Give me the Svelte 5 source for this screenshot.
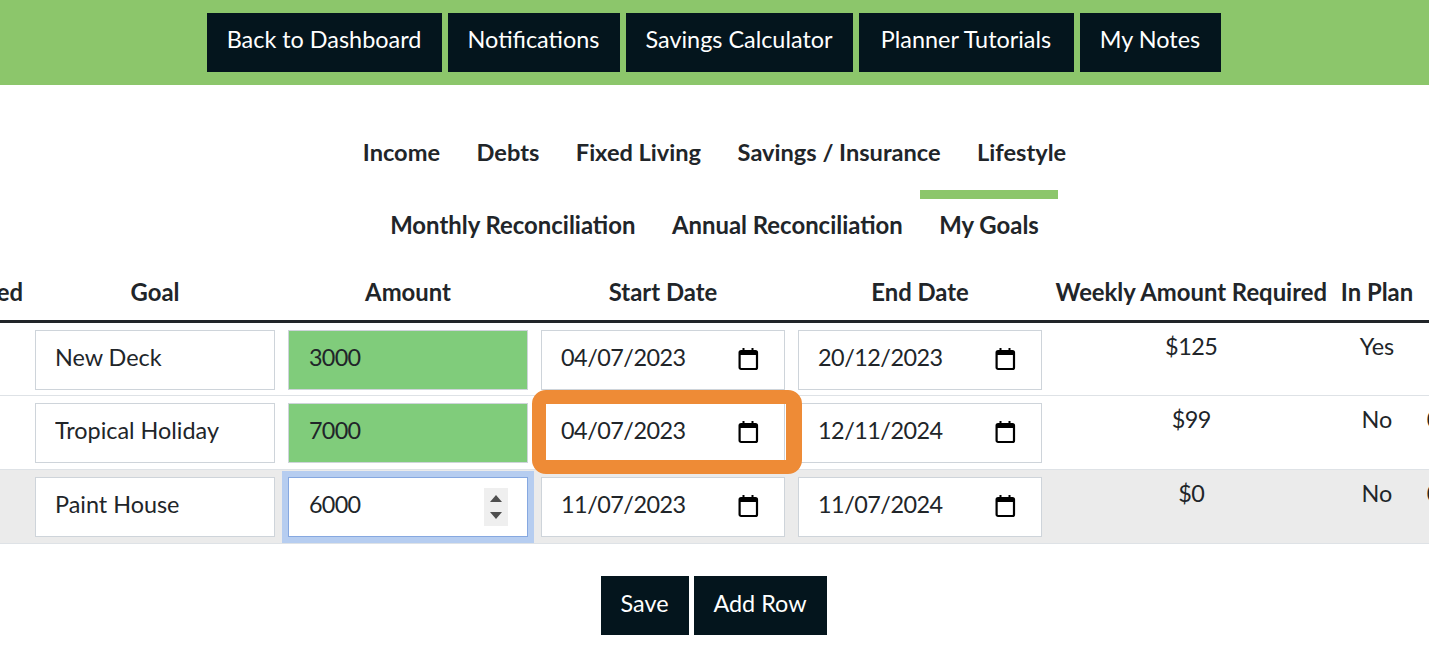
<script>
  const topLinks = ['Back to Dashboard', 'Notifications', 'Savings Calculator', 'Planner Tutorials', 'My Notes'];
  const tabsOne = ['Income', 'Debts', 'Fixed Living', 'Savings / Insurance', 'Lifestyle'];
  const tabsTwo = ['Monthly Reconciliation', 'Annual Reconciliation', 'My Goals'];

  const goals = [
    { name: 'New Deck', amount: '3000', start: '04/07/2023', end: '20/12/2023', weekly: '$125', plan: 'Yes', rest: '' },
    { name: 'Tropical Holiday', amount: '7000', start: '04/07/2023', end: '12/11/2024', weekly: '$99', plan: 'No', rest: '0', marked: true },
    { name: 'Paint House', amount: '6000', start: '11/07/2023', end: '11/07/2024', weekly: '$0', plan: 'No', rest: '0', editing: true }
  ];
</script>

{#snippet calendar()}
  <svg class="cal" width="22" height="24" viewBox="0 0 22 24" aria-hidden="true">
    <path d="M6.5 1v4M15.5 1v4" stroke="#000" stroke-width="2" />
    <rect x="2.6" y="4" width="17.4" height="18" rx="1.5" fill="none" stroke="#000" stroke-width="2.2" />
    <path d="M2.6 5h17.4v3H2.6z" fill="#000" />
  </svg>
{/snippet}

<div class="page">
  <header class="topbar">
    {#each topLinks as link}
      <button class="dark">{link}</button>
    {/each}
  </header>

  <nav class="tabs">
    <div class="tabrow">
      {#each tabsOne as tab}
        <span class="tab">{tab}</span>
      {/each}
      <span class="indicator"></span>
    </div>
    <div class="tabrow second">
      {#each tabsTwo as tab}
        <span class="tab">{tab}</span>
      {/each}
    </div>
  </nav>

  <div class="tablewrap">
    <table>
      <colgroup>
        <col style="width:110px" />
        <col style="width:253px" />
        <col style="width:253px" />
        <col style="width:257px" />
        <col style="width:257px" />
        <col style="width:285.5px" />
        <col style="width:86px" />
        <col style="width:27px" />
      </colgroup>
      <thead>
        <tr>
          <th>Achieved</th>
          <th>Goal</th>
          <th>Amount</th>
          <th>Start Date</th>
          <th>End Date</th>
          <th>Weekly Amount Required</th>
          <th>In Plan</th>
          <th></th>
        </tr>
      </thead>
      <tbody>
        {#each goals as goal}
          <tr class:shaded={goal.editing}>
            <td></td>
            <td><div class="field"><input value={goal.name} /></div></td>
            <td>
              <div class="field amount" class:filled={!goal.editing} class:focused={goal.editing}>
                <input class="num" value={goal.amount} />
                {#if goal.editing}
                  <span class="spinner">
                    <svg width="14" height="30" viewBox="0 0 14 30" aria-hidden="true">
                      <path d="M7 3l6 7H1zM7 27l6-7H1z" fill="#4f4f4f" />
                    </svg>
                  </span>
                {/if}
              </div>
            </td>
            <td>
              <div class="field date">
                <input class="num" value={goal.start} />
                {@render calendar()}
                {#if goal.marked}<span class="callout"></span>{/if}
              </div>
            </td>
            <td>
              <div class="field date">
                <input class="num" value={goal.end} />
                {@render calendar()}
              </div>
            </td>
            <td class="plain num">{goal.weekly}</td>
            <td class="plain">{goal.plan}</td>
            <td class="plain">{goal.rest}</td>
          </tr>
        {/each}
      </tbody>
    </table>
  </div>

  <div class="actions">
    <button class="dark">Save</button>
    <button class="dark">Add Row</button>
  </div>
</div>

<style>
  :global(body) {
    margin: 0;
    background: #fff;
  }
  .page {
    font-family: Lato, "Liberation Sans", sans-serif;
    font-size: 23.4px;
    color: #212529;
    height: 655px;
    overflow: hidden;
  }
  .topbar {
    display: grid;
    grid-template-columns: 235px 172px 227px 215px 141px;
    justify-content: center;
    gap: 6px;
    height: 85px;
    padding: 13px 2px 0 0;
    box-sizing: border-box;
    background: #8cc66b;
  }
  .dark {
    height: 59px;
    padding: 0 0 7px;
    border: none;
    background: #04151d;
    color: #fff;
    font: inherit;
  }
  .tabs {
    padding-top: 31px;
  }
  .tabrow {
    position: relative;
    display: flex;
    justify-content: center;
    height: 73px;
    line-height: 72px;
    font-size: 23.6px;
    font-weight: 700;
  }
  .tabrow.second {
    font-size: 23.9px;
  }
  .tab {
    padding: 0 18.25px;
  }
  .indicator {
    position: absolute;
    left: 920px;
    top: 74px;
    width: 138px;
    height: 9px;
    background: #8cc66b;
  }
  .tablewrap {
    overflow: hidden;
  }
  table {
    table-layout: fixed;
    width: 1528.5px;
    margin-left: -81.5px;
    border-collapse: collapse;
  }
  th {
    height: 59px;
    padding: 2px 6.5px 0;
    font-size: 23.85px;
    font-weight: 700;
    text-align: center;
    white-space: nowrap;
    border-bottom: 3px solid #212529;
    box-sizing: border-box;
  }
  td {
    padding: 7px 6.5px 5.5px;
    border-bottom: 1px solid #dee2e6;
    vertical-align: top;
    text-align: center;
  }
  td.plain {
    line-height: 34px;
    padding-top: 6px;
  }
  .num {
    letter-spacing: -0.5px;
  }
  tr.shaded td {
    padding-bottom: 6.5px;
    background: #ebebeb;
  }
  .field {
    position: relative;
    display: flex;
    align-items: center;
    height: 60px;
    box-sizing: border-box;
    padding: 0 19px;
    border: 1px solid #ced4da;
    background: #fff;
  }
  .field input {
    flex: 1;
    min-width: 0;
    padding: 0 0 6px;
    border: none;
    outline: none;
    background: transparent;
    color: inherit;
    font: inherit;
  }
  .field input.num {
    letter-spacing: -0.5px;
  }
  .field.amount {
    padding-left: 20px;
  }
  .field.amount input.num {
    letter-spacing: -0.7px;
  }
  .field.filled {
    background: #80cc7b;
  }
  .field.focused {
    z-index: 1;
    border-color: #86a8e0;
    box-shadow: 0 0 0 6px #b6cdf0;
  }
  .field.date {
    padding-right: 25px;
  }
  .cal {
    flex: none;
    margin-bottom: 2px;
  }
  .spinner {
    display: flex;
    align-items: center;
    justify-content: center;
    width: 24px;
    height: 38px;
    background: #efefef;
  }
  .callout {
    position: absolute;
    z-index: 2;
    left: -10px;
    top: -14px;
    width: 270px;
    height: 84px;
    box-sizing: border-box;
    border-style: solid;
    border-color: #ee8b36;
    border-width: 14px 16px 14px 14px;
    border-radius: 14px;
  }
  .actions {
    display: grid;
    grid-template-columns: 88px 133px;
    justify-content: center;
    gap: 5px;
    margin-top: 32px;
    padding-right: 2px;
  }
  .actions .dark {
    padding-bottom: 5px;
  }
</style>
